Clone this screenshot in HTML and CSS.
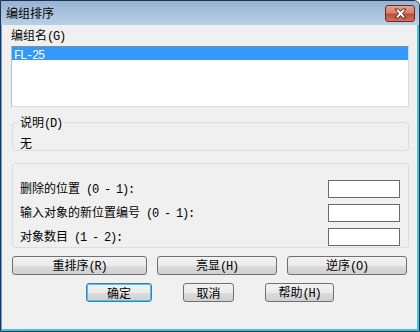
FILE: index.html
```html
<!DOCTYPE html>
<html lang="zh-CN">
<head>
<meta charset="utf-8">
<title>编组排序</title>
<link rel="stylesheet" href="styles.css">
</head>
<body>
<div class="window">
  <div class="titlebar">
    <span class="title">编组排序</span>
    <div class="close">
      <svg width="15" height="11" viewBox="0 0 15 11">
        <path d="M2 1 L5.5 1 L7.5 3.5 L9.5 1 L13 1 L9.5 5.5 L13 10 L9.5 10 L7.5 7.5 L5.5 10 L2 10 L5.5 5.5 Z" fill="#ffffff" stroke="#5a2420" stroke-width="1" stroke-linejoin="round"/>
      </svg>
    </div>
  </div>
  <div class="frame">
    <div class="label">编组名<span class="m">(G)</span></div>
    <div class="listbox">
      <div class="item selected"><span class="m">FL-25</span></div>
    </div>
    <fieldset class="group desc">
      <legend>说明<span class="m">(D)</span></legend>
      <div class="desc-text">无</div>
    </fieldset>
    <fieldset class="group fields">
      <div class="row"><span class="lbl">删除的位置<span class="m"> (0 - 1):</span></span><input class="input" type="text"></div>
      <div class="row"><span class="lbl">输入对象的新位置编号<span class="m"> (0 - 1):</span></span><input class="input" type="text"></div>
      <div class="row"><span class="lbl">对象数目<span class="m"> (1 - 2):</span></span><input class="input" type="text"></div>
    </fieldset>
    <div class="buttons row1">
      <button class="btn w1">重排序<span class="m">(R)</span></button>
      <button class="btn w2">亮显<span class="m">(H)</span></button>
      <button class="btn w3">逆序<span class="m">(O)</span></button>
    </div>
    <div class="buttons row2">
      <button class="btn ok">确定</button>
      <button class="btn cancel">取消</button>
      <button class="btn help">帮助<span class="m">(H)</span></button>
    </div>
  </div>
</div>
</body>
</html>
```
FILE: styles.css
```css
html, body {
  margin: 0;
  padding: 0;
}
body {
  width: 420px;
  height: 332px;
  overflow: hidden;
  font-family: "Noto Sans CJK SC", sans-serif;
  font-size: 12px;
  color: #000;
  background: #f0f0f0;
}
.m {
  font-family: "Liberation Mono", "DejaVu Sans Mono", monospace;
  font-size: 12px;
  letter-spacing: -1.2px;
  white-space: pre;
}
.window {
  box-sizing: border-box;
  width: 420px;
  height: 332px;
  border: 1px solid #1c3652;
  border-radius: 0 6px 0 0;
  background: #f0f0f0;
  display: flex;
  flex-direction: column;
  overflow: hidden;
}
.titlebar {
  height: 24px;
  flex: none;
  display: flex;
  align-items: center;
  justify-content: space-between;
  padding: 0 4px 0 5px;
  background: linear-gradient(#98b3d3, #b9cfe7);
  border-radius: 0 5px 0 0;
}
.title {
  line-height: 16px;
}
.close {
  box-sizing: border-box;
  width: 30px;
  height: 17px;
  border: 1px solid #6a2d28;
  border-radius: 3px;
  background: linear-gradient(#e6a393 0%, #d8806d 45%, #c24a35 55%, #d2745c 100%);
  display: flex;
  align-items: center;
  justify-content: center;
}
.close svg {
  display: block;
}
.frame {
  flex: 1;
  border-left: 1px solid #6c9fd0;
  border-right: 2px solid #3fc1ee;
  border-bottom: 2px solid #3fc1ee;
  padding: 0 8px 0 9px;
  display: flex;
  flex-direction: column;
}
.label {
  padding-top: 2px;
  line-height: 16px;
  height: 16px;
  margin-bottom: 3px;
}
.listbox {
  box-sizing: border-box;
  height: 61px;
  background: #fff;
  border: 1px solid #d4dbe2;
  border-top-color: #8a8b8c;
  border-left-color: #b8bdc3;
  padding: 0;
}
.item {
  height: 13px;
  line-height: 13px;
  padding-left: 2px;
}
.selected {
  background: #3399ff;
  color: #fff;
}
.group {
  margin: 0 0 0 1px;
  border: 1px solid #d5dfe5;
  border-radius: 3px;
  min-width: 0;
}
.desc {
  margin-top: 8px;
  padding: 0 7px 0 7px;
}
.desc legend {
  padding: 0 2px;
  margin-left: -2px;
  line-height: 14px;
  height: 14px;
}
.desc-text {
  padding-top: 7px;
  line-height: 14px;
  height: 14px;
}
.fields {
  margin-top: 12px;
  padding: 16px 8px 1px 7px;
  display: flex;
  flex-direction: column;
  gap: 6px;
}
.row {
  display: flex;
  justify-content: space-between;
  align-items: center;
  height: 18px;
}
.lbl {
  line-height: 16px;
}
.input {
  box-sizing: border-box;
  width: 72px;
  height: 18px;
  border: 1px solid #6a6a6a;
  background: #fff;
  margin: 0;
  padding: 0;
  outline: none;
}
.buttons {
  display: flex;
  margin-top: 8px;
}
.row1 {
  padding-left: 1px;
  gap: 10px;
}
.row2 {
  padding-left: 75px;
  gap: 31px;
}
.btn {
  box-sizing: border-box;
  height: 19px;
  border: 1px solid #707070;
  border-radius: 3px;
  background: linear-gradient(#f2f2f2 0%, #ebebeb 50%, #dddddd 51%, #cfcfcf 100%);
  font-family: "Noto Sans CJK SC", sans-serif;
  font-size: 12px;
  line-height: 15px;
  color: #000;
  padding: 0;
  margin: 0;
}
.w1 { width: 135px; }
.w2 { width: 120px; }
.w3 { width: 120px; }
.ok {
  width: 66px;
  border-color: #3c7fb1;
  box-shadow: inset 0 0 0 1px #48c5f2;
}
.cancel { width: 51px; }
.help { width: 69px; }
```
